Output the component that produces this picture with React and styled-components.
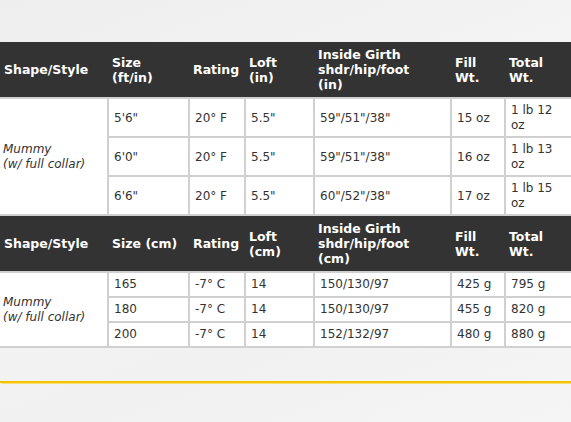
import React from "react";
import styled, { createGlobalStyle } from "styled-components";

const GlobalStyle = createGlobalStyle`
  html, body {
    margin: 0;
    padding: 0;
    background: #f1f1f1;
  }
  body {
    font-family: "DejaVu Sans", Verdana, sans-serif;
  }
`;

const Page = styled.div`
  width: 571px;
  height: 422px;
  overflow: hidden;
  background: linear-gradient(160deg, #eeeeee 0%, #f4f4f4 40%, #f1f1f1 70%, #f5f5f5 100%);
  display: flex;
  flex-direction: column;
  padding-top: 42px;
  box-sizing: border-box;
`;

const SpecTable = styled.table`
  width: 571px;
  table-layout: fixed;
  border-collapse: collapse;
  font-size: 12px;
  line-height: 15px;
  color: #333;
`;

const Col = styled.col`
  width: ${(p) => p.$w}px;
`;

const HeadCell = styled.th`
  background: #333333;
  color: #fff;
  font-size: 12.5px;
  font-weight: bold;
  text-align: left;
  vertical-align: middle;
  padding: 5px 4px;
  height: 45px;
`;

const Cell = styled.td`
  background: #fff;
  border: 2px solid #d0d0d0;
  padding: ${(p) => (p.$tall ? "4px 5px 3px" : "4px 5px 4px")};
  height: ${(p) => (p.$tall ? "30px" : "15px")};
  vertical-align: middle;
  &:last-child {
    border-right: none;
  }
`;

const StyleCell = styled(Cell)`
  font-style: italic;
  border-left: none;
  padding-left: 3px;
`;

const Rule = styled.div`
  margin-top: 33px;
  height: 2px;
  background: #f3c300;
  box-shadow: 0 0 1px 0.5px #f9df7a;
`;

const widths = [108, 81, 56, 69, 137, 54, 66];

const imperial = [
  ["5'6\"", "20° F", "5.5\"", "59\"/51\"/38\"", "15 oz", "1 lb 12 oz"],
  ["6'0\"", "20° F", "5.5\"", "59\"/51\"/38\"", "16 oz", "1 lb 13 oz"],
  ["6'6\"", "20° F", "5.5\"", "60\"/52\"/38\"", "17 oz", "1 lb 15 oz"],
];

const metric = [
  ["165", "-7° C", "14", "150/130/97", "425 g", "795 g"],
  ["180", "-7° C", "14", "150/130/97", "455 g", "820 g"],
  ["200", "-7° C", "14", "152/132/97", "480 g", "880 g"],
];

const HeaderRow = ({ size, loft, girth }) => (
  <tr>
    <HeadCell>Shape/Style</HeadCell>
    <HeadCell>{size}</HeadCell>
    <HeadCell>Rating</HeadCell>
    <HeadCell>{loft}</HeadCell>
    <HeadCell>
      Inside Girth
      <br />
      shdr/hip/foot
      <br />
      {girth}
    </HeadCell>
    <HeadCell>
      Fill
      <br />
      Wt.
    </HeadCell>
    <HeadCell>
      Total
      <br />
      Wt.
    </HeadCell>
  </tr>
);

const BodyRows = ({ rows, tall }) =>
  rows.map((r, i) => (
    <tr key={i}>
      {i === 0 && (
        <StyleCell rowSpan={rows.length}>
          Mummy
          <br />
          (w/ full collar)
        </StyleCell>
      )}
      {r.map((v, j) => (
        <Cell key={j} $tall={tall}>
          {v}
        </Cell>
      ))}
    </tr>
  ));

export default function App() {
  return (
    <Page>
      <GlobalStyle />
      <SpecTable>
        <colgroup>
          {widths.map((w, i) => (
            <Col key={i} $w={w} />
          ))}
        </colgroup>
        <tbody>
          <HeaderRow
            size={
              <>
                Size
                <br />
                (ft/in)
              </>
            }
            loft={
              <>
                Loft
                <br />
                (in)
              </>
            }
            girth="(in)"
          />
          <BodyRows rows={imperial} tall />
          <HeaderRow
            size="Size (cm)"
            loft={
              <>
                Loft
                <br />
                (cm)
              </>
            }
            girth="(cm)"
          />
          <BodyRows rows={metric} />
        </tbody>
      </SpecTable>
      <Rule />
    </Page>
  );
}
